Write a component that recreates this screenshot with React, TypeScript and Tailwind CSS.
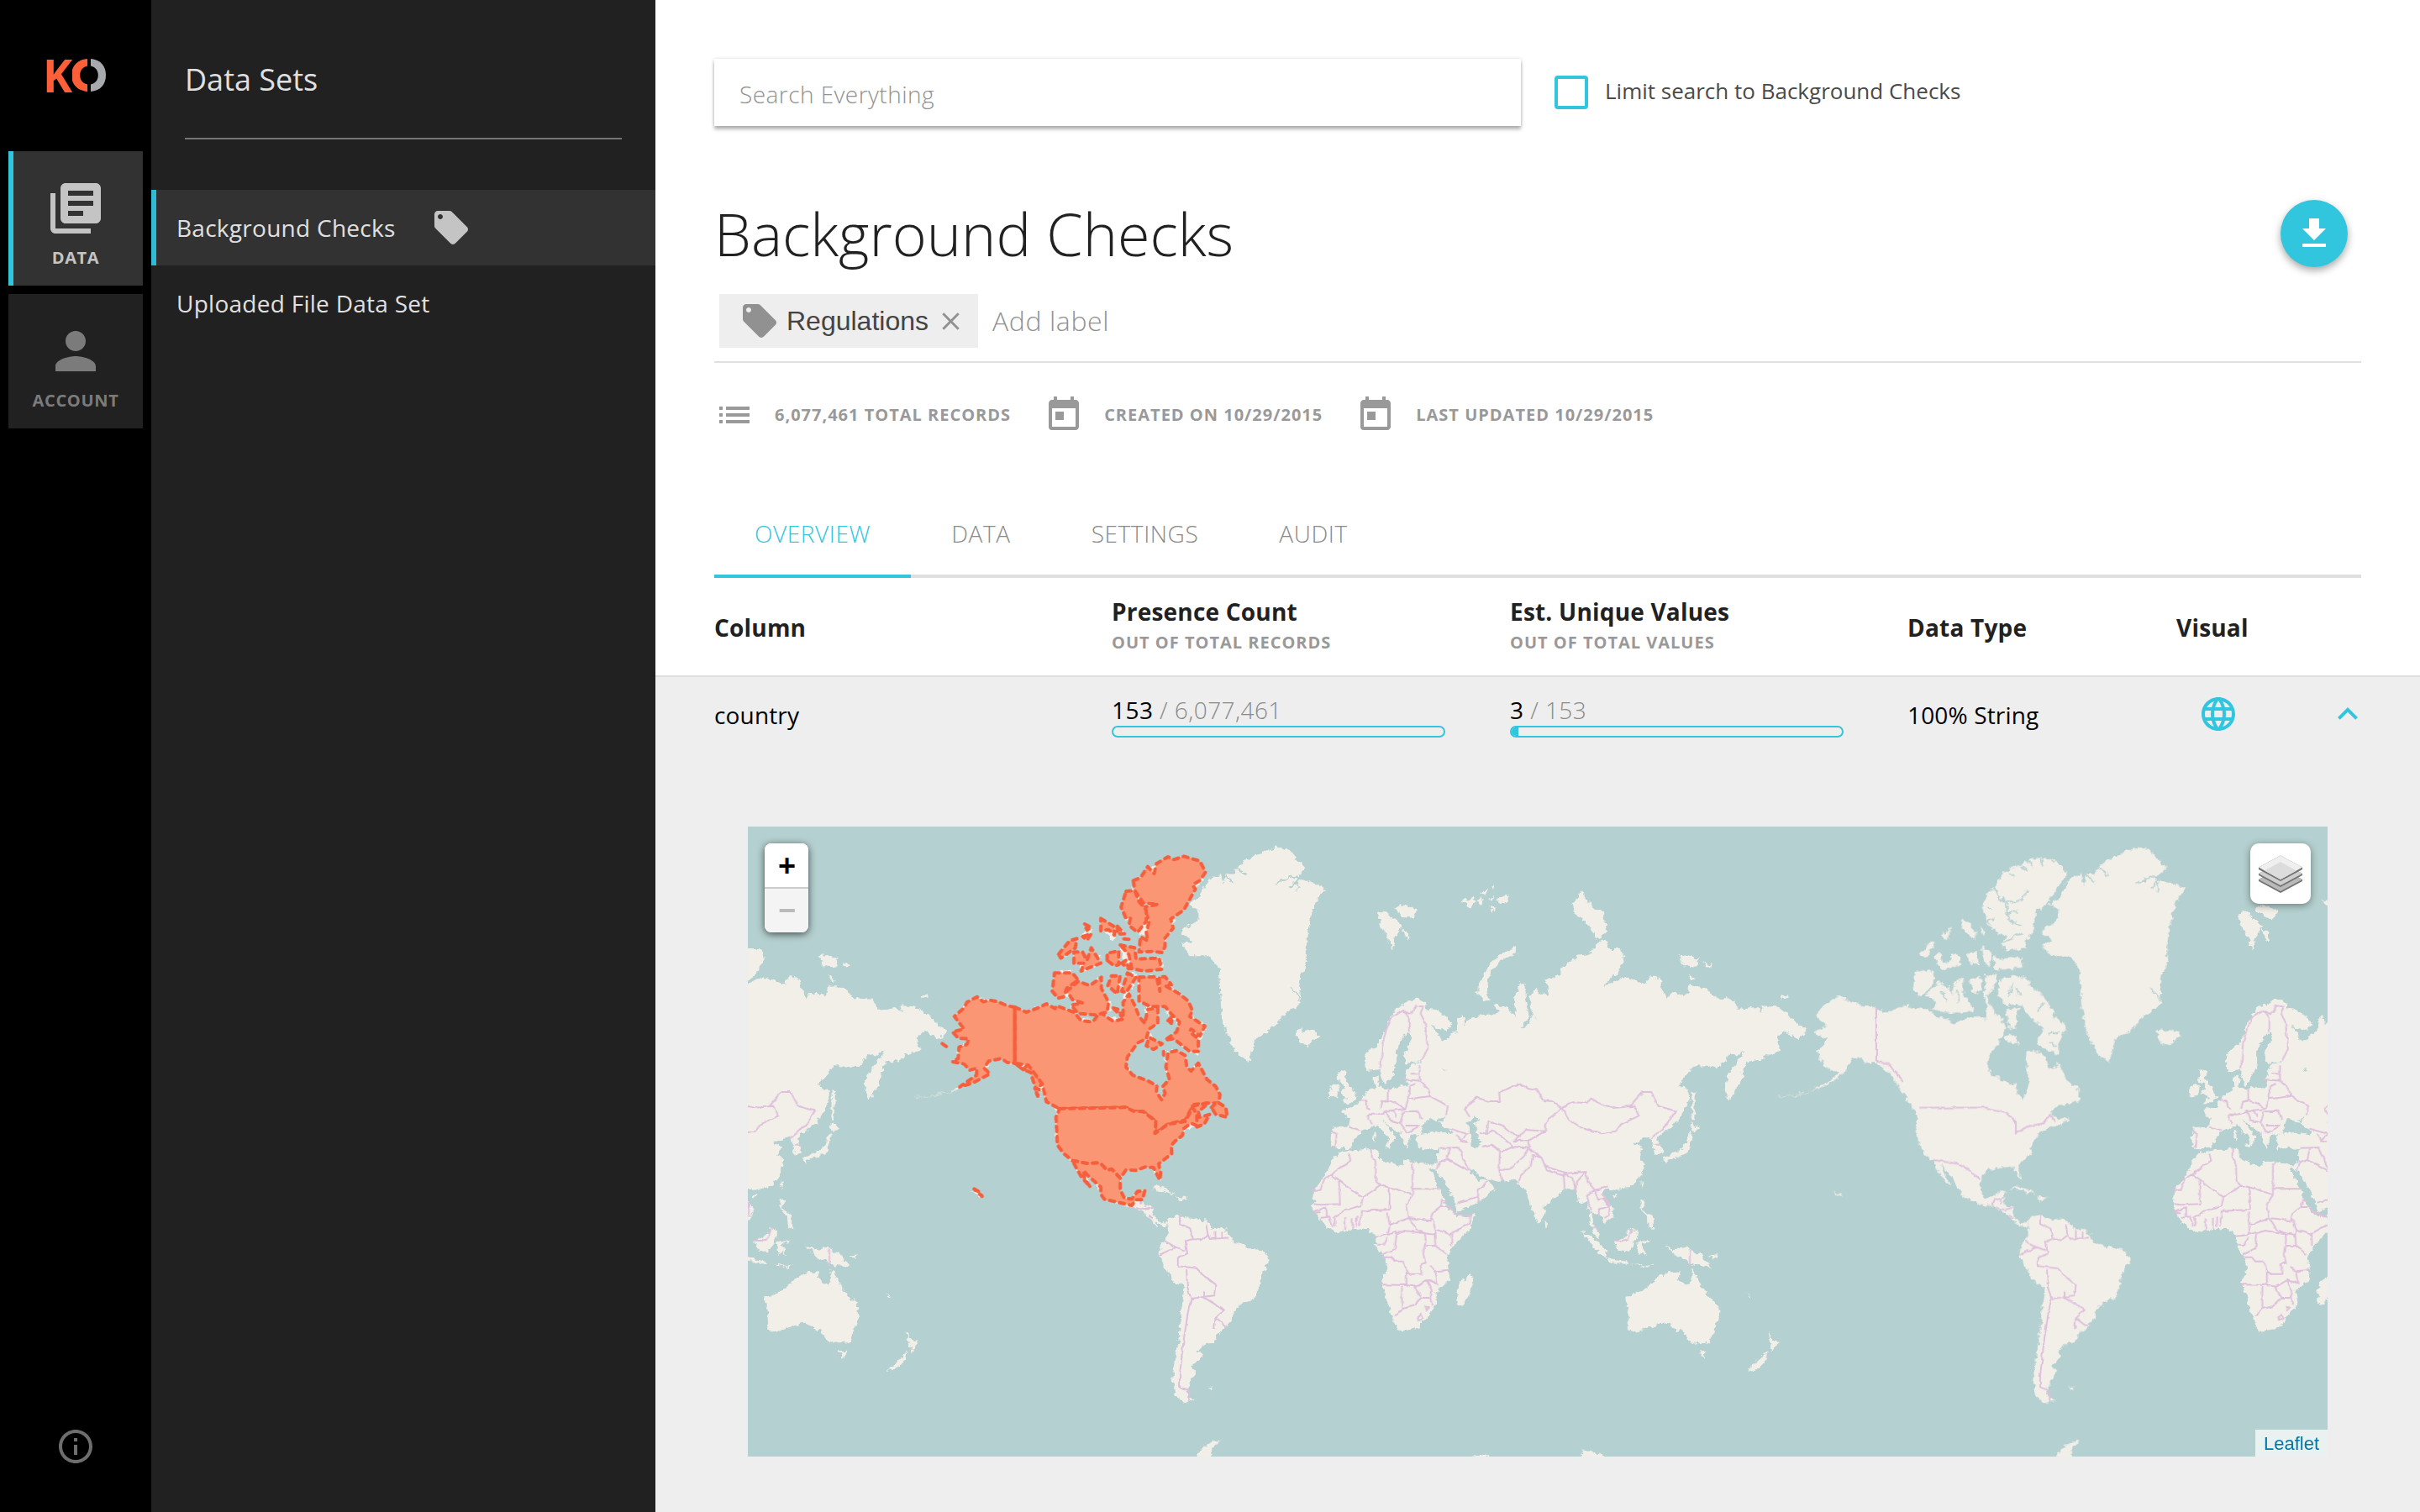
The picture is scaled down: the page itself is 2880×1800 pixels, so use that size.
import React from "react";
import {
  MdLibraryBooks,
  MdPerson,
  MdLocalOffer,
  MdFileDownload,
  MdList,
  MdToday,
  MdLanguage,
  MdExpandLess,
  MdInfoOutline,
  MdClose,
} from "react-icons/md";

const WORLD = 1024;

// Americas, Greenland and Iceland
const LAND_WEST = [
  "M155,415L180,425L215,436L253,442L285,455L310,440L340,432L342,442L375,440L395,450L415,465L440,468L465,480L490,465L520,462L545,470L545,442L556,430L570,455L590,470L600,490L590,512L575,530L560,545L548,575L558,600L590,615L625,628L630,650L645,660L650,640L662,620L655,590L650,565L655,545L680,545L705,558L710,585L725,590L738,572L760,615L795,640L793,665L760,672L735,675L718,692L735,708L768,705L735,728L712,730L690,742L668,765L665,790L640,808L632,825L640,853L625,840L618,822L580,824L545,830L530,855L530,880L545,897L565,895L578,883L598,880L590,900L595,915L618,918L620,940L640,958L658,952L655,966L630,962L610,945L590,930L560,915L530,912L500,900L480,890L475,875L450,845L425,815L435,840L454,868L440,860L415,830L405,806L385,795L370,775L358,740L362,700L352,682L335,660L318,640L300,610L280,592L255,575L220,572L210,560L190,565L175,590L150,610L110,632L75,645L125,618L155,597L140,590L120,585L95,550L110,535L125,518L84,503L120,482L92,460L120,430Z",
  "M670,85L700,83L735,92L762,120L740,150L705,195L680,210L670,255L650,285L655,300L600,305L585,290L600,270L575,262L550,240L537,205L545,170L565,155L590,120L630,100Z",
  "M565,320L585,325L640,320L645,345L600,350L570,350Z",
  "M420,380L455,400L465,375L485,370L482,400L505,435L510,450L470,455L430,450L400,445L415,430L385,410Z",
  "M358,355L395,352L412,368L395,395L372,415L350,400Z",
  "M405,318L425,310L430,335L450,330L455,310L478,320L475,340L430,352Z",
  "M368,318L395,285L412,285L400,305L385,320Z",
  "M425,270L455,248L440,280Z",
  "M478,232L500,240L520,262L515,280L490,262Z",
  "M525,245L545,262L540,270Z",
  "M495,315L520,305L528,340L505,335Z",
  "M535,295L560,310L555,345L540,330Z",
  "M500,375L530,365L535,400L515,410Z",
  "M545,365L575,360L565,395L548,410L556,440L540,430Z",
  "M580,375L610,365L650,370L670,395L700,415L722,445L725,460L762,490L740,520L740,555L700,540L680,520L700,495L660,460L640,435L600,435L578,410Z",
  "M595,515L610,500L635,528L605,525Z",
  "M600,445L632,440L625,490L605,490Z",
  "M658,948L690,938L700,945L760,950L780,968L815,975L832,1000L880,1018L912,1022L932,1045L907,1080L902,1110L889,1137L845,1155L827,1195L790,1225L780,1243L755,1248L737,1262L748,1275L735,1290L722,1302L733,1312L715,1340L710,1370L732,1382L700,1388L680,1370L670,1330L685,1250L690,1200L702,1110L670,1095L650,1060L635,1035L640,1010L658,985Z",
  "M613,873L635,868L680,888L650,882Z",
  "M680,894L712,897L690,903Z",
  "M764,1352L782,1350L775,1357Z",
  "M730,1520L755,1490L798,1474L772,1500L775,1520Z",
  "M135,880L150,884L165,892L155,892Z",
];

const GREENLAND = [
  "M690,260L740,230L740,205L712,195L745,175L765,135L800,120L805,145L815,120L830,122L850,100L890,78L945,57L985,65L1025,108L1000,132L1050,145L1076,158L1050,190L1038,230L1028,290L1028,340L1010,370L1012,430L960,465L930,495L890,515L875,573L840,550L810,490L800,440L795,350L770,318L720,318L695,290L725,282Z",
  "M1000,495L1015,490L1020,500L1045,492L1065,510L1030,532L1005,520Z",
];

const FJORDS =
  "M945,145L985,128L1010,130L985,155M1005,140L1000,165M830,105L865,118L870,128M815,125L835,145M985,395L1005,412L1008,425M568,150L580,180L610,190L640,185L655,160M640,185L645,178M600,190L605,230L640,245M605,215L630,210M585,290L620,270L640,262M660,90L668,105M690,85L695,100M640,100L655,115M610,120L622,130M545,200L562,205M550,235L570,225M618,380L605,415M625,395L640,415M700,430L680,450M740,500L715,505M735,535L715,525M425,400L445,425M470,400L470,430M450,380L458,410";

// Svalbard and Franz Josef Land
const LAND_ARCTIC = [
  "M842,215L865,210L890,225L925,245L905,270L890,303L870,265L850,245Z",
  "M900,205L925,195L980,208L960,228L930,225Z",
  "M925,250L945,265L950,282L935,275Z",
  "M1130,187L1170,180L1178,184L1165,200L1155,198Z",
  "M1185,185L1205,178L1200,195Z",
  "M1198,168L1225,155L1215,172Z",
  "M1235,150L1243,148L1240,160Z",
  "M1225,180L1240,175L1235,190Z",
  "M1250,182L1295,172L1285,188L1262,190Z",
  "M1225,200L1250,205L1235,210Z",
  "M1510,200L1525,185L1545,163L1568,190L1620,215L1630,260L1600,280L1565,240L1530,222Z",
  "M1140,1520L1200,1510L1245,1520Z",
  "M1540,1520L1550,1500L1600,1508L1640,1520Z",
];

// Eurasia, Africa and Oceania
const LAND_EAST = [
  "M205,465L200,405L240,370L265,290L290,240L345,205L375,220L372,240L405,248L435,275L445,300L430,322L400,312L385,300L405,330L420,362L435,345L460,320L465,300L462,275L475,265L480,300L495,280L530,265L570,262L580,248L565,225L600,240L630,270L620,220L640,150L655,155L655,210L663,275L640,313L658,305L675,262L690,290L672,250L665,200L680,170L700,195L725,185L710,140L750,125L755,95L800,55L840,45L868,-5L888,5L885,30L925,30L935,70L915,110L875,160L935,130L995,155L1005,130L1035,135L1040,175L1055,210L1065,185L1110,195L1115,160L1160,165L1190,205L1245,210L1255,245L1310,240L1325,260L1320,232L1360,235L1390,255L1420,290L1450,322L1425,355L1390,320L1365,345L1380,390L1340,405L1315,430L1280,430L1265,470L1270,490L1230,570L1218,530L1225,480L1250,440L1275,390L1250,410L1230,405L1205,450L1130,448L1085,515L1115,535L1118,570L1095,625L1070,665L1050,680L1028,705L1042,755L1022,765L1015,725L1010,700L985,708L962,722L990,738L975,760L990,800L975,850L950,880L905,890L885,885L870,905L905,960L900,985L878,1005L855,970L838,965L850,1020L868,1060L848,1050L835,1000L830,930L808,942L795,895L765,885L750,905L710,945L708,985L690,1010L670,960L655,890L635,870L620,855L580,857L545,850L525,835L498,812L497,822L520,858L548,852L570,885L520,935L460,970L455,930L430,870L400,815L390,808L402,790L412,745L380,740L350,745L345,700L355,690L330,692L318,742L300,690L270,660L250,640L285,695L285,712L275,725L270,740L255,735L272,712L235,660L218,665L188,680L160,740L125,742L105,735L108,665L155,665L158,640L135,605L175,590L185,570L210,535L230,520L222,490L240,478L238,520L260,530L325,520L315,495L320,460L335,442L362,432L318,437L310,400L335,350L325,325L310,340L290,390L290,440L275,490L255,515L242,460L225,462Z",
  "M127,755L220,740L238,745L240,780L300,805L310,785L395,800L385,815L410,880L430,945L460,985L512,978L492,1035L452,1090L432,1130L440,1210L400,1255L405,1295L385,1330L350,1385L295,1395L270,1320L247,1220L262,1170L250,1120L230,1090L232,1050L200,1025L115,1042L75,1000L54,960L57,890L95,820L107,785Z",
  "M500,1190L508,1210L480,1300L465,1305L460,1270L468,1220Z",
  "M937,1275L990,1245L1030,1200L1060,1182L1090,1185L1085,1210L1115,1232L1128,1170L1155,1240L1200,1305L1203,1345L1175,1435L1145,1438L1115,1430L1095,1385L1085,1395L1050,1363L1000,1385L955,1400L945,1385L945,1340Z",
  "M1145,1465L1168,1463L1158,1493Z",
  "M1338,1398L1355,1430L1372,1430L1350,1468L1345,1440Z",
  "M1342,1463L1332,1500L1300,1540L1283,1532L1318,1490Z",
  "M1048,1085L1075,1102L1110,1095L1150,1120L1180,1168L1150,1158L1125,1160L1110,1140L1085,1130L1062,1102Z",
  "M905,1070L930,1065L955,1025L970,1040L960,1080L945,1112L915,1105Z",
  "M810,1033L840,1055L885,1110L880,1130L850,1100Z",
  "M880,1130L940,1145L940,1155L890,1145Z",
  "M950,1156L1000,1160L1022,1152L1000,1166Z",
  "M970,1075L1010,1070L985,1085L998,1125L985,1110L975,1125Z",
  "M980,920L992,925L985,955L1010,980L1020,1030L1002,1025L1000,985L980,955Z",
  "M1122,652L1150,665L1128,685Z",
  "M1118,680L1126,700L1112,760L1062,780L1050,798L1045,775L1090,750L1110,720Z",
  "M1125,535L1135,540L1134,640L1125,640Z",
  "M980,860L988,865L982,885Z",
  "M900,905L915,908L905,920Z",
  "M705,995L718,1015L710,1028Z",
  "M130,460L150,465L143,490L165,530L177,555L165,580L135,580L150,560L130,540L145,525L122,490Z",
  "M110,512L128,520L122,555L98,562L100,535Z",
  "M515,185L530,140L555,75L590,45L625,18L632,40L575,80L550,130L545,190L555,215L535,210Z",
  "M1090,55L1115,50L1145,65L1135,95L1100,90Z",
  "M1155,75L1182,88L1172,97Z",
  "M1115,118L1135,140L1122,140Z",
  "M1375,200L1395,192L1400,202L1380,208Z",
  "M225,675L232,680L230,718L224,712Z",
  "M1170,1130L1200,1118L1190,1132Z",
  "M1275,1258L1295,1275L1288,1275Z",
];

const SEAS = [
  "M357,690L368,650L382,632L400,648L412,650L447,682L440,692L400,683Z",
  "M402,642L428,626L412,648Z",
  "M488,650L515,625L526,640L508,662L530,720L522,743L500,735L500,700Z",
  "M420,452L430,465L424,468Z",
];

const BORDERS_WEST =
  "M253,442L253,570L290,578L325,620M370,681L545,681L600,692L625,715L625,742L660,725L700,718L715,698L730,715M405,806L470,815L500,830L530,852M560,915L568,900L586,900L585,912M572,920L595,925L618,920M608,938L618,946M690,938L690,960L720,970L725,995L705,1000L710,1030L685,1040L685,1060L735,1065L750,1080L785,1105L782,1130L720,1138L710,1110L708,1068M635,1033L680,1015L650,1000M705,1022L680,1015M760,960L765,985L745,998L725,995M765,985L770,995L820,992M785,975L785,995M803,978L803,993M755,1120L755,1135L808,1165L785,1185L815,1205M785,1185L782,1210M720,1138L712,1170L700,1240L690,1320L690,1350L715,1358L715,1382";

const BORDERS_EAST =
  "M245,455L250,370L260,320L275,275L310,248L330,262L345,232L365,235L358,260L370,290L378,385L360,430M310,248L325,275L325,325M355,445L355,500L380,530L385,555L435,590L430,620M325,520L325,560L315,600M310,495L340,498L355,500M330,475L352,475M325,520L345,510M265,530L265,570L290,580L315,600M325,565L385,555M310,610L350,608L362,640M310,610L300,650L320,685L350,665M315,660L355,660M210,620L235,620L280,605L315,600M205,570L207,595L215,600M185,572L205,570M245,600L250,575L265,570M210,640L210,620M220,655L215,640M260,605L270,640L300,650M280,605L290,630M155,665L188,680M108,680L120,690L117,740M300,690L305,680M497,630L482,600L515,560L550,573L582,573L580,540L640,512L665,530L685,525L705,570L730,573L757,597L735,620L710,655L710,680L655,675L640,700L620,690L595,665L550,645L545,690L525,683M545,690L562,676L620,735L585,755M640,700L620,715L665,712L665,740L620,735M757,597L790,577L830,580L840,560L860,580L905,597L960,590L975,625L925,655L910,680L870,688L815,670L780,640L757,597M950,590L985,540L1010,540L1030,590L1078,608L1055,655L1010,705M1022,728L1036,728M710,680L665,712M665,740L700,775L710,805L770,830L825,825L830,860L850,890L890,880M710,805L715,820L765,840M700,775L675,765L670,800L640,840L635,868M530,735L560,728L582,750L580,820L590,855M580,820L610,815L650,770L665,740M412,740L465,738L480,780L495,820M402,820L412,790L432,780L440,740M432,780L490,820M440,670L490,690L470,715L460,690M470,715L490,720M460,935L520,915L522,890L545,860M520,915L525,935M795,895L800,860L825,825M765,885L762,830L790,850L795,895M850,890L828,910L838,965M850,890L860,925L875,920L890,950L862,958L862,980M870,900L893,945L890,980L878,990M845,1020L858,1030M905,1070L940,1072L955,1030M1119,1100L1119,1158M335,795L335,907M335,886L413,886M230,785L232,860L245,875L195,915L105,835L160,785L155,760M220,740L220,775L230,785M105,835L85,850L75,890L52,890M127,858L130,940L75,943L55,940M195,915L190,945L140,965L110,990M245,875L270,880L335,907M270,880L270,960L190,965L185,1020M335,907L318,940L325,990L270,1015L265,970M325,990L385,1000L390,975L415,950L418,925L430,930M415,950L440,952L455,975L498,985L495,1010L440,1048L400,1030L390,990M370,1045L310,1035L290,1045L285,1100L250,1120M445,1045L445,1090M370,1045L400,1050L402,1030M325,990L345,1030L370,1045L372,1070L365,1120M370,1088L400,1090L430,1120M400,1090L398,1050M250,1130L275,1130L285,1145L310,1145L318,1180L318,1230L245,1228M318,1180L330,1190L360,1190L358,1155L372,1150L365,1120M385,1160L400,1180L440,1175M400,1180L405,1225L395,1215M318,1230L345,1235L375,1212L400,1220M375,1212L390,1250L385,1275M305,1235L305,1315L285,1340M305,1315L335,1305L360,1275L340,1235M360,1275L385,1275L390,1300M230,1055L265,1050L290,1040M270,1020L265,1050M235,1085L255,1085L265,1060M350,1345L360,1335L365,1350L352,1357ZM372,1305L382,1310L375,1320ZM75,990L100,985L110,1020M115,990L115,1020M145,990L145,1035M165,990L165,1030M178,985L175,1025M55,965L90,955L90,985M55,970L75,970";

// Canada, Alaska, the lower states and Mexico with their islands
const HIGHLIGHT = [
  "M371,657L345,652L310,637L285,632L262,638L240,620L205,640L195,660L162,690L195,735L155,745L175,768L212,770L205,790L178,800L175,840L155,852L195,860L215,882L240,875L238,900L180,942L225,928L285,895L265,875L280,850L325,840L345,855L371,857Z",
  "M371,857L400,880L418,858L465,930L445,955L425,890L400,880Z",
  "M371,657L410,675L450,660L480,645L510,662L515,652L575,675L600,705L640,710L665,675L710,707L745,700L745,640L765,610L785,650L800,690L820,715L830,665L865,660L865,715L835,735L825,770L795,785L760,835L755,870L778,900L830,920L862,938L860,960L878,988L890,965L882,940L905,915L893,870L900,820L930,812L960,830L965,870L980,885L1005,857L1035,915L1065,940L1080,970L1075,1000L1030,1000L990,1005L975,1030L960,1060L900,1075L855,1108L858,1065L815,1030L780,1028L755,1015L525,1020L480,995L465,930L418,865L371,857Z",
  "M985,1010L1040,1000L1005,1030L1010,1050L1045,1040L1025,1075L1000,1085L980,1045Z",
  "M1050,1015L1070,995L1100,1015L1105,1050L1065,1040Z",
  "M525,1020L755,1015L780,1028L815,1030L858,1065L855,1108L900,1075L960,1065L985,1015L1000,1040L1000,1080L980,1072L955,1090L950,1115L925,1135L912,1150L913,1180L868,1217L875,1250L872,1275L850,1230L820,1228L790,1240L755,1238L735,1268L705,1235L690,1240L665,1213L620,1215L570,1205L540,1180L518,1150L513,1050Z",
  "M570,1205L620,1215L665,1213L690,1240L705,1235L735,1268L735,1310L750,1340L775,1342L795,1315L820,1313L812,1345L790,1345L775,1365L680,1343L668,1325L668,1300L620,1255L608,1240L612,1270L632,1300L600,1262L585,1235Z",
  "M230,1306L250,1318L258,1333L242,1318Z",
  "M508,535L570,535L590,560L550,590L540,620L520,625L500,600Z",
  "M550,600L590,565L630,580L670,550L670,590L695,640L690,675L650,685L590,680L565,650L605,642L570,630Z",
  "M780,205L805,195L830,155L852,180L860,145L900,120L920,130L955,118L1010,135L1030,175L1010,205L985,220L995,235L955,310L910,342L918,375L890,410L890,440L880,462L845,458L800,460L805,405L830,420L825,390L835,350L815,300L865,290L815,285L785,240Z",
  "M755,243L785,240L800,280L825,310L825,350L795,390L765,365L770,340L755,340L738,300Z",
  "M735,435L785,445L790,485L870,482L878,522L820,528L775,520L765,470Z",
  "M668,340L715,370L715,400L695,380L668,385Z",
  "M725,368L750,395L725,395Z",
  "M612,360L635,372L620,382Z",
  "M605,405L635,395L620,418Z",
  "M522,468L560,420L585,412L580,445L530,482Z",
  "M575,500L575,460L605,460L620,490L635,445L668,500L600,528L610,500Z",
  "M690,490L690,465L730,455L730,505L715,510Z",
  "M740,500L755,490L765,520Z",
  "M748,413L770,415Z",
  "M692,580L705,545L735,545L725,610Z",
  "M760,535L790,550L755,605L740,600Z",
  "M710,660L730,665L740,690Z",
  "M800,550L860,548L872,600L870,548L890,548L912,577L890,580L940,610L970,635L985,670L975,690L1028,725L1010,760L980,735L975,745L1005,770L1005,815L975,815L920,770L890,775L930,745L940,710L910,680L890,655L840,655L800,635L800,580Z",
  "M825,795L835,765L880,788L850,808Z",
  "M900,705L915,690L912,715Z",
  "M120,787L140,802Z",
  "M440,948L455,950L450,975Z",
  "M885,815L885,828Z",
];

const FRAME_WEST = "translate(1230 -4) scale(0.44643 0.49745)";
const FRAME_MID = "translate(460 -4) scale(0.34439 0.49745)";
const FRAME_EAST = "translate(650 136) scale(0.42092 0.33333)";
const FRAME_HIGHLIGHT = "translate(190 -4) scale(0.34439 0.33333)";

function WorldMap() {
  return (
    <svg viewBox="0 0 1880 750" className="block h-[750px] w-[1880px]" aria-label="World map">
      <defs>
        <filter id="coast" x="0" y="0" width="1880" height="750" filterUnits="userSpaceOnUse" colorInterpolationFilters="sRGB">
          <feTurbulence type="fractalNoise" baseFrequency="0.16" numOctaves="3" seed="4" result="n" />
          <feDisplacementMap in="SourceGraphic" in2="n" scale="8" xChannelSelector="R" yChannelSelector="G" />
          <feGaussianBlur stdDeviation="0.7" />
        </filter>
        <filter id="line" x="0" y="0" width="1880" height="750" filterUnits="userSpaceOnUse" colorInterpolationFilters="sRGB">
          <feTurbulence type="fractalNoise" baseFrequency="0.12" numOctaves="2" seed="9" result="n" />
          <feDisplacementMap in="SourceGraphic" in2="n" scale="4" xChannelSelector="R" yChannelSelector="G" />
          <feGaussianBlur stdDeviation="0.5" />
        </filter>
        <g id="west" transform={FRAME_WEST}>
          <path d={LAND_WEST.join("")} />
          <path d={GREENLAND.join("")} />
          <path d={FJORDS} fill="none" stroke="#b5d0d0" strokeWidth="4" />
          <path d="M-15,656L30,652L75,643" fill="none" stroke="#f2efe9" strokeWidth="2" opacity="0.6" />
        </g>
        <g id="east">
          <path d={LAND_ARCTIC.join("")} transform={FRAME_MID} />
          <g transform={FRAME_EAST}>
            <path d={LAND_EAST.join("")} />
            <path d={SEAS.join("")} fill="#b5d0d0" />
          </g>
        </g>
        <path id="bwest" d={BORDERS_WEST} transform={FRAME_WEST} vectorEffect="non-scaling-stroke" />
        <path id="beast" d={BORDERS_EAST} transform={FRAME_EAST} vectorEffect="non-scaling-stroke" />
      </defs>
      <rect width="1880" height="750" fill="#b5d0d0" />
      <g filter="url(#coast)" fill="#f2efe9">
        <use href="#west" x={-WORLD} />
        <use href="#west" />
        <use href="#east" x={-WORLD} />
        <use href="#east" />
        <use href="#east" x={WORLD} />
      </g>
      <g filter="url(#line)" fill="none" stroke="#dfc0dc" strokeWidth="2">
        <use href="#bwest" x={-WORLD} />
        <use href="#bwest" />
        <use href="#beast" x={-WORLD} />
        <use href="#beast" />
        <use href="#beast" x={WORLD} />
      </g>
      <g transform={FRAME_HIGHLIGHT} fill="#fb9675" stroke="#f65e3c" strokeWidth="4" strokeLinecap="round" strokeLinejoin="round" strokeDasharray="6 6">
        {HIGHLIGHT.map((d) => (
          <path key={d} d={d} vectorEffect="non-scaling-stroke" />
        ))}
        <path d="M371,657L371,857" strokeDasharray="none" vectorEffect="non-scaling-stroke" />
      </g>
    </svg>
  );
}

function Logo() {
  return (
    <div className="flex h-[40px] items-center">
      <span className="text-[53px] leading-[40px] font-bold text-[#ff5f38]">K</span>
      <svg viewBox="0 0 40 39" className="-mt-[1px] mr-[3px] ml-0 h-[39px] w-[40px]">
        <path d="M18,0V8.500C12,10 9.200,14 9.200,19.500S12,29 18,30.500V39C6,38 -1,30 -1,19.500S6,1 18,0Z" fill="#ff5f38" />
        <path d="M22,0V8.500C28,10 30.800,14 30.800,19.500S28,29 22,30.500V39C34,38 40,30 40,19.500S34,1 22,0Z" fill="#a7a9ac" />
      </svg>
    </div>
  );
}

function LayersIcon() {
  return (
    <svg viewBox="0 0 52 46" className="h-[46px] w-[52px]">
      <path d="M0,29L26,15L52,29V31L26,45L0,31Z" fill="#747474" />
      <path d="M0,29L26,15L52,29L26,43Z" fill="#b9b9b9" />
      <path d="M0,22L26,8L52,22V24L26,38L0,24Z" fill="#747474" />
      <path d="M0,22L26,8L52,22L26,36Z" fill="#cfcfcf" />
      <path d="M0,14.500L26,0.500L52,14.500V17L26,31L0,17Z" fill="#747474" />
      <path d="M0,14.500L26,0.500L52,14.500L26,29Z" fill="#efefef" />
      <path d="M7,18.500L26,8L45,18.500L26,29Z" fill="#dcdcdc" />
    </svg>
  );
}

function Stat({ icon, children }: { icon: React.ReactNode; children: React.ReactNode }) {
  return (
    <div className="flex items-center gap-6 text-[48px] text-[#999]">
      {icon}
      <span className="text-[20px] font-bold tracking-[1px] whitespace-nowrap">{children}</span>
    </div>
  );
}

function Count({ value, total, fill }: { value: string; total: string; fill: number }) {
  return (
    <div>
      <div className="text-[28px] leading-[38px] font-light tracking-[0.45px] text-[#8a8a8a]">
        <span className="font-normal text-black">{value}</span> / {total}
      </div>
      <div className="h-[14px] w-[397px] overflow-hidden rounded-full border-2 border-[#31c5de]">
        <div className="h-full bg-[#31c5de]" style={{ width: fill }} />
      </div>
    </div>
  );
}

const GRID = "grid grid-cols-[473px_474px_473px_320px_1fr] items-center pr-[62px] pl-[70px]";

export default function App() {
  return (
    <div className="flex h-[1800px] w-[2880px] overflow-hidden bg-white font-['Open_Sans',sans-serif]">
      <nav className="flex w-[180px] shrink-0 flex-col items-center bg-black pb-[54px]">
        <div className="flex h-[180px] items-center">
          <Logo />
        </div>
        <div className="flex h-[160px] w-[160px] flex-col items-center border-l-[6px] border-[#31c5de] bg-[#323232] pt-8 pr-[6px] text-[#c4c4c4]">
          <MdLibraryBooks size={72} />
          <span className="mt-[9px] text-[20px] leading-[28px] font-bold tracking-[0.6px]">DATA</span>
        </div>
        <div className="mt-[10px] flex h-[160px] w-[160px] flex-col items-center bg-[#212121] pt-8 text-[#7b7b7b]">
          <MdPerson size={72} />
          <span className="mt-[9px] text-[20px] leading-[28px] font-bold tracking-[0.7px]">ACCOUNT</span>
        </div>
        <MdInfoOutline size={48} className="mt-auto text-[#6e6e6e]" />
      </nav>

      <aside className="w-[600px] shrink-0 bg-[#212121] text-[#e0e0e0]">
        <div className="mx-[40px] mb-[60px] h-[166px] border-b-2 border-[#757575] pt-[70px] text-[36px] leading-[50px]">
          Data Sets
        </div>
        <div className="flex h-[90px] items-center border-l-[6px] border-[#31b9d6] bg-[#323232] pl-6 text-[28px] tracking-[0.27px]">
          Background Checks
          <MdLocalOffer size={48} className="ml-[42px] text-[#c4c4c4]" />
        </div>
        <div className="flex h-[90px] items-center pl-[30px] text-[28px] tracking-[0.27px]">Uploaded File Data Set</div>
      </aside>

      <main className="flex flex-1 flex-col pt-[70px]">
        <div className="flex h-[80px] px-[70px]">
          <div className="flex h-[80px] w-[960px] items-center bg-white pt-[3px] pl-[30px] text-[28px] font-light tracking-[0.45px] text-[#919191] shadow-[0_0_4px_rgba(0,0,0,0.14),0_4px_4px_rgba(0,0,0,0.28)]">
            Search Everything
          </div>
          <div className="mt-5 ml-10 h-[40px] w-[40px] rounded-[4px] border-4 border-[#31c5de]" />
          <div className="ml-5 text-[26px] leading-[77px] text-[#4a4a4a]">Limit search to Background Checks</div>
        </div>

        <div className="mx-[70px] mt-[80px] flex h-[96px] items-center justify-between pr-4">
          <h1 className="text-[70px] leading-[96px] font-light text-[#212121]">Background Checks</h1>
          <div className="flex h-[80px] w-[80px] items-center justify-center rounded-full bg-[#31c5de] text-white shadow-[0_4px_10px_rgba(0,0,0,0.35)]">
            <MdFileDownload size={48} />
          </div>
        </div>

        <div className="mx-[70px] mt-6 flex h-[82px] items-start border-b-2 border-[#e0e0e0] pl-[6px]">
          <div className="flex h-[64px] w-[308px] items-center bg-[#eee] pl-6 text-[#919191]">
            <MdLocalOffer size={48} />
            <span className="ml-[8px] font-['Liberation_Sans',sans-serif] text-[32px] text-[#444]">Regulations</span>
            <MdClose size={35} className="ml-[9px]" />
          </div>
          <div className="ml-[17px] text-[32px] leading-[64px] font-light tracking-[0.6px] text-[#919191]">Add label</div>
        </div>

        <div className="mx-[70px] mt-[38px] flex h-[48px] items-center gap-[39px]">
          <Stat icon={<MdList />}>6,077,461 TOTAL RECORDS</Stat>
          <Stat icon={<MdToday />}>CREATED ON 10/29/2015</Stat>
          <Stat icon={<MdToday />}>LAST UPDATED 10/29/2015</Stat>
        </div>

        <div className="mx-[70px] mt-[70px] flex h-[100px] border-b-4 border-[#dfdfdf] text-[28px] leading-[95px] font-light tracking-[0.6px] text-[#8a8a8a]">
          <div className="h-[100px] border-b-4 border-[#31c5de] px-[48px] text-[#31c5de]">OVERVIEW</div>
          <div className="px-[48px]">DATA</div>
          <div className="px-[48px]">SETTINGS</div>
          <div className="px-[48px]">AUDIT</div>
        </div>

        <div className={`${GRID} h-[118px] border-b-2 border-[#dfdfdf] text-[28px] font-bold tracking-[0.2px] text-[#212121]`}>
          <div className="pt-[2px]">Column</div>
          <div className="pb-[3px]">
            <div className="leading-[40px]">Presence Count</div>
            <div className="text-[20px] leading-[34px] tracking-[1px] text-[#999]">OUT OF TOTAL RECORDS</div>
          </div>
          <div className="pb-[3px]">
            <div className="leading-[40px]">Est. Unique Values</div>
            <div className="text-[20px] leading-[34px] tracking-[1px] text-[#999]">OUT OF TOTAL VALUES</div>
          </div>
          <div className="pt-[2px]">Data Type</div>
          <div className="pt-[2px]">Visual</div>
        </div>

        <div className="flex-1 bg-[#eee]">
          <div className={`${GRID} h-[92px] text-[28px] text-black`}>
            <div className="pb-[2px] tracking-[0.15px]">country</div>
            <Count value="153" total="6,077,461" fill={0} />
            <Count value="3" total="153" fill={8} />
            <div className="pb-[2px] tracking-[0.15px]">100% String</div>
            <div className="mb-1 flex items-center justify-between pl-[26px] text-[#31c5de]">
              <MdLanguage size={48} />
              <MdExpandLess size={48} />
            </div>
          </div>

          <div className="relative mx-[110px] mt-[86px] h-[750px] w-[1880px] overflow-hidden font-['Liberation_Sans',sans-serif]">
            <WorldMap />
            <div className="absolute top-[20px] left-[20px] w-[52px] overflow-hidden rounded-[8px] pl-[1px] text-center font-bold shadow-[0_2px_10px_rgba(0,0,0,0.65)] bg-white">
              <div className="-ml-[1px] h-[54px] border-b-2 border-[#ccc] bg-white pl-[1px] text-[36px] leading-[53px] text-black">+</div>
              <div className="-ml-[1px] h-[52px] bg-[#f4f4f4] pl-[1px] text-[36px] leading-[51px] text-[#bbb]">−</div>
            </div>
            <div className="absolute top-[20px] right-[20px] flex h-[72px] w-[72px] items-center justify-center rounded-[10px] bg-white pt-[2px] shadow-[0_2px_10px_rgba(0,0,0,0.4)]">
              <LayersIcon />
            </div>
            <div className="absolute right-0 bottom-0 h-[32px] w-[86px] bg-white/70 text-center text-[22px] leading-[34px] text-[#0078A8]">
              Leaflet
            </div>
          </div>
        </div>
      </main>
    </div>
  );
}
